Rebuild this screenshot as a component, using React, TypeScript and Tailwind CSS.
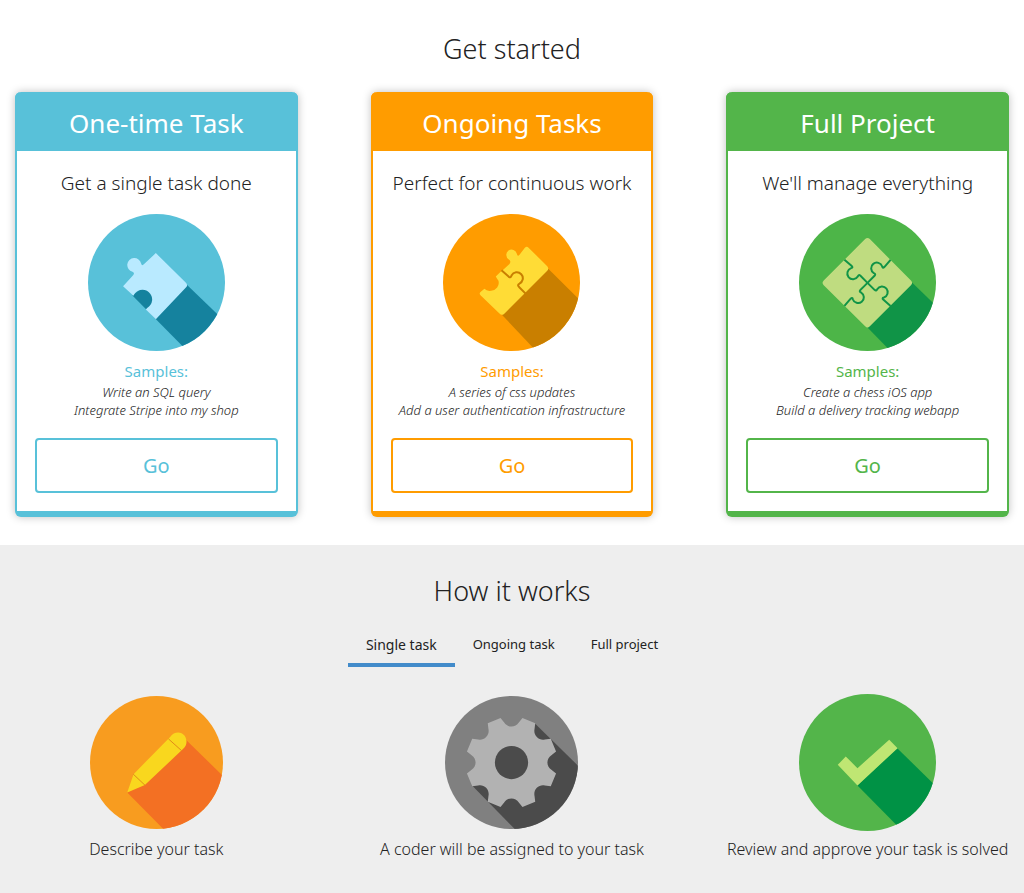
import { useState } from 'react';
import type { ReactNode } from 'react';

type Plan = {
  id: string;
  title: string;
  tagline: string;
  samples: string[];
  icon: ReactNode;
  cardStyle: string;
  headerStyle: string;
  textStyle: string;
  buttonStyle: string;
};

type BadgeProps = {
  id: string;
  cx?: number;
  cy: number;
  r: number;
  fill: string;
  className: string;
  children: ReactNode;
};

// Round icon background; everything inside is clipped to the circle
function Badge({ id, cx = 240, cy, r, fill, className, children }: BadgeProps) {
  return (
    <svg viewBox={`${cx - r} ${cy - r} ${r * 2} ${r * 2}`} className={className} aria-hidden="true">
      <clipPath id={id}>
        <circle cx={cx} cy={cy} r={r} />
      </clipPath>
      <circle cx={cx} cy={cy} r={r} fill={fill} />
      <g clipPath={`url(#${id})`}>{children}</g>
    </svg>
  );
}

function SinglePieceIcon() {
  return (
    <Badge id="single-piece" cy={235} r={205} fill="#58c1d9" className="size-[137px]">
      <path d="M330 241 L470 376 L470 470 L362 470 L168 274 L198 250 Z" fill="#15829e" />
      <path
        d="M238 147 L328 236 Q335 243 328 250 L238 345 L208 316 L212 311 A29 29 0 1 0 171 275 L140 246 L170 213 Q176 207 168 203 A21 21 0 1 1 194 178 Q196 187 203 180 Z"
        fill="#b9eaff"
      />
    </Badge>
  );
}

function TwoPiecesIcon() {
  return (
    <Badge id="two-pieces" cy={235} r={205} fill="#ff9c00" className="size-[137px]">
      <path d="M350 194 L470 313 L470 470 L342 470 L212 332 Z" fill="#c97f00" />
      <path
        d="M291 131 L347 186 Q353 193 347 200 L220 327 Q212 336 204 328 L148 274 Q141 267 149 262 L159 254 Q166 262 179 260 A24 24 0 0 0 201 230 Q196 222 193 217 L209 201 L216 196 L234 180 Q240 171 232 166 A16 16 0 1 1 256 149 Q258 159 264 152 L280 131 Q286 125 291 131 Z"
        fill="#ffdc36"
      />
      <path
        d="M210 198 L232 218 Q238 222 240 214 A18 18 0 1 1 263 239 Q256 243 264 250 L283 269"
        fill="none"
        stroke="#c97f00"
        strokeWidth="6"
      />
    </Badge>
  );
}

function FourPiecesIcon() {
  return (
    <Badge id="four-pieces" cy={235} r={205} fill="#4db548" className="size-[137px]">
      <path d="M374 236 L470 329 L470 470 L338 470 L240 370 Z" fill="#109447" />
      <path
        d="M247 105 L370 229 Q377 236 370 243 L247 366 Q240 373 233 366 L109 243 Q102 236 109 229 L233 105 Q240 98 247 105 Z"
        fill="#bfdc80"
      />
      {[0, 90, 180, 270].map(angle => (
        <path
          key={angle}
          d="M240 236 L261 215 Q266 209 259 207 A17 17 0 1 1 284 187 Q285 194 291 188 L309 167"
          transform={`rotate(${angle} 240 236)`}
          fill="none"
          stroke="#109447"
          strokeWidth="6"
        />
      ))}
    </Badge>
  );
}

function PencilIcon() {
  return (
    <Badge id="pencil" cy={229} r={200} fill="#f89c1f" className="size-[133px]">
      <path d="M330 162 L470 299 L470 470 L301 470 L152 319 L205 290 Z" fill="#f37023" />
      <path d="M152 319 L171 264 L281 152 C296 130 328 136 330 164 Q332 179 318 190 L205 297 Z" fill="#f9d71e" />
      <path d="M170 264 L206 298 M276 158 L315 193" stroke="#e08a1a" strokeWidth="3" />
    </Badge>
  );
}

const GEAR_CENTER = [240, 229];

function rotatePoint(x: number, y: number, degrees: number) {
  const a = (degrees * Math.PI) / 180;
  const dx = x - GEAR_CENTER[0];
  const dy = y - GEAR_CENTER[1];
  const rx = GEAR_CENTER[0] + dx * Math.cos(a) - dy * Math.sin(a);
  const ry = GEAR_CENTER[1] + dx * Math.sin(a) + dy * Math.cos(a);
  return `${rx.toFixed(1)} ${ry.toFixed(1)}`;
}

// One notch per 45 degrees, joined by the flat tooth tips
const GEAR_PATH = [0, 45, 90, 135, 180, 225, 270, 315]
  .map((deg, i) => {
    const p = (x: number, y: number) => rotatePoint(x, y, deg);
    return `${i === 0 ? 'M' : 'L'}${p(207, 95)} L${p(218, 109)} C${p(228, 125)} ${p(252, 125)} ${p(262, 109)} L${p(273, 95)}`;
  })
  .join(' ') + ' Z';

function GearIcon() {
  return (
    <Badge id="gear" cy={229} r={200} fill="#808080" className="size-[133px]">
      <path d="M309 110 L470 268 L470 470 L290 470 L120 297 Z" fill="#4b4b4b" />
      <path d={GEAR_PATH} fill="#b2b2b2" />
      <circle cx="240" cy="229" r="50" fill="#4b4b4b" />
    </Badge>
  );
}

function CheckIcon() {
  return (
    <Badge id="check" cy={229} r={205} fill="#53b54a" className="size-[137px]">
      <path d="M329 186 L470 325 L470 470 L380 470 L210 298 Z" fill="#009245" />
      <path d="M151 236 L175 211 L210 246 L305 161 L330 186 L210 298 Z" fill="#bfe673" />
    </Badge>
  );
}

const PLANS: Plan[] = [
  {
    id: 'one-time',
    title: 'One-time Task',
    tagline: 'Get a single task done',
    samples: ['Write an SQL query', 'Integrate Stripe into my shop'],
    icon: <SinglePieceIcon />,
    cardStyle: 'border-[#58c1d9]',
    headerStyle: 'bg-[#58c1d9]',
    textStyle: 'text-[#58c1d9]',
    buttonStyle: 'border-[#58c1d9] text-[#58c1d9]',
  },
  {
    id: 'ongoing',
    title: 'Ongoing Tasks',
    tagline: 'Perfect for continuous work',
    samples: ['A series of css updates', 'Add a user authentication infrastructure'],
    icon: <TwoPiecesIcon />,
    cardStyle: 'border-[#ff9c00]',
    headerStyle: 'bg-[#ff9c00]',
    textStyle: 'text-[#ff9c00]',
    buttonStyle: 'border-[#ff9c00] text-[#ff9c00]',
  },
  {
    id: 'full',
    title: 'Full Project',
    tagline: "We'll manage everything",
    samples: ['Create a chess iOS app', 'Build a delivery tracking webapp'],
    icon: <FourPiecesIcon />,
    cardStyle: 'border-[#53b54a]',
    headerStyle: 'bg-[#53b54a]',
    textStyle: 'text-[#53b54a]',
    buttonStyle: 'border-[#53b54a] text-[#53b54a]',
  },
];

const TABS = ['Single task', 'Ongoing task', 'Full project'];

const STEPS = [
  { label: 'Describe your task', icon: <PencilIcon /> },
  { label: 'A coder will be assigned to your task', icon: <GearIcon /> },
  { label: 'Review and approve your task is solved', icon: <CheckIcon /> },
];

function PlanCard({ plan }: { plan: Plan }) {
  return (
    <article className={`rounded-md border-2 border-t-0 border-b-[6px] bg-white text-center shadow-[0_0_8px_rgba(0,0,0,0.25)] ${plan.cardStyle}`}>
      <h2 className={`-mx-0.5 rounded-t-md pt-[13px] pb-[10px] text-[26px] leading-9 text-white ${plan.headerStyle}`}>{plan.title}</h2>
      <div className="px-[18px] pt-[18px] pb-[18px]">
        <p className="text-[19px] leading-7 font-light whitespace-nowrap">{plan.tagline}</p>
        <div className="mt-[17px] flex justify-center">{plan.icon}</div>
        <h3 className={`mt-2 text-[15px] leading-6 ${plan.textStyle}`}>Samples:</h3>
        <ul className="-mx-2 text-[13px] leading-[18px] font-light italic">
          {plan.samples.map(sample => <li key={sample}>{sample}</li>)}
        </ul>
        <button type="button" className={`mt-[19px] h-[55px] w-full cursor-pointer rounded border-2 text-xl ${plan.buttonStyle}`}>
          Go
        </button>
      </div>
    </article>
  );
}

export default function App() {
  const [activeTab, setActiveTab] = useState(TABS[0]);

  return (
    <main className="min-h-screen bg-[#eee] font-['Noto_Sans',sans-serif] text-[#222]">
      <section className="bg-white px-[15px] pt-[31px] pb-7">
        <h1 className="text-center text-[27px] leading-9 font-light">Get started</h1>
        <div className="mt-[25px] grid grid-cols-3 gap-[73px]">
          {PLANS.map(plan => <PlanCard key={plan.id} plan={plan} />)}
        </div>
      </section>

      <section className="px-[15px] pt-7 pb-7">
        <h1 className="text-center text-[27px] leading-9 font-light">How it works</h1>
        <div role="tablist" className="mt-4 flex justify-center">
          {TABS.map(tab => (
            <button
              key={tab}
              type="button"
              role="tab"
              aria-selected={tab === activeTab}
              onClick={() => setActiveTab(tab)}
              className={`h-[42px] cursor-pointer border-b-4 px-[18px] pt-0.5 ${
                tab === activeTab ? 'border-[#428bca] text-sm' : 'border-transparent text-[13px]'
              }`}
            >
              {tab}
            </button>
          ))}
        </div>
        <ol className="mt-[27px] grid grid-cols-3 gap-[73px]">
          {STEPS.map(step => (
            <li key={step.label} className="flex flex-col items-center">
              <div className="flex h-[137px] items-center">{step.icon}</div>
              <p className="mt-1.5 text-base leading-6 font-light whitespace-nowrap">{step.label}</p>
            </li>
          ))}
        </ol>
      </section>
    </main>
  );
}
